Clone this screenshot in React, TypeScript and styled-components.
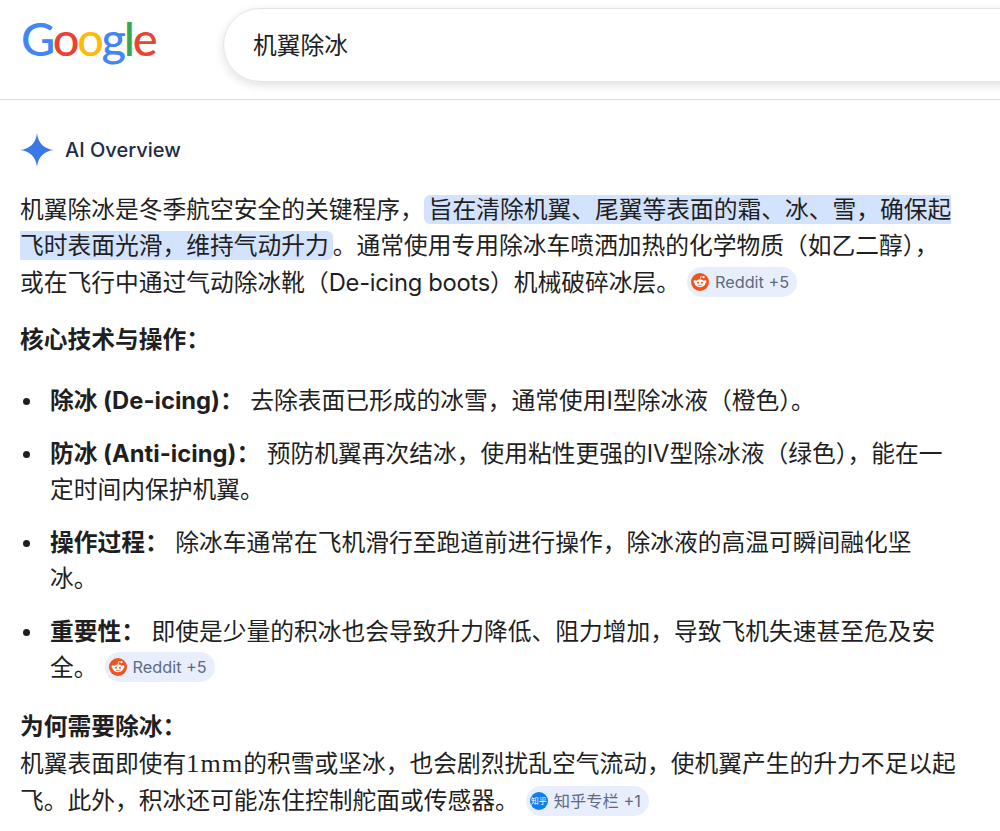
import styled, { createGlobalStyle } from 'styled-components';

const GlobalStyle = createGlobalStyle`
  html, body {
    margin: 0;
    padding: 0;
    background: #fff;
  }
`

const Page = styled.div`
  width: 1000px;
  height: 831px;
  overflow: hidden;
  color: #1f1f1f;
  font-family: "Inter", "Noto Sans CJK SC", sans-serif;
`
const Header = styled.header`
  display: flex;
  height: 100px;
  padding: 8px 0 0 21px;
  box-sizing: border-box;
  border-bottom: 1px solid #dadce0;
  overflow: hidden;
`
const Logo = styled.div`
  width: 202px;
  flex-shrink: 0;
  margin-top: -8px;
  font-family: "Lato", sans-serif;
  font-size: 47px;
  line-height: 77px;
  letter-spacing: -2.3px;
  font-weight: 500;
`
const LogoLetter = styled.span<{ $color: string }>`
  color: ${(p) => p.$color};
`
const SearchBox = styled.div`
  flex-shrink: 0;
  width: 850px;
  height: 74px;
  padding: 0 0 4px 29px;
  box-sizing: border-box;
  display: flex;
  align-items: center;
  border: 1px solid #e3e3e3;
  border-radius: 37px;
  box-shadow: 0 3px 10px rgba(32, 33, 36, 0.14);
  font-size: 23.75px;
  color: #202124;
`
const Main = styled.main`
  padding: 32px 42px 0 20px;
`
const OverviewHead = styled.div`
  display: flex;
  align-items: center;
  gap: 11px;
  height: 36px;
  font-size: 20px;
  font-weight: 500;
  color: #1c2d45;
`
const Para = styled.p`
  margin: 24px 0 0;
  font-size: 23.75px;
  line-height: 36.4px;
`
const Mark = styled.span`
  background: #d3e3fd;
  border-radius: 6px;
  padding: 0 4px 0 5px;
`
const Latin = styled.span`
  letter-spacing: -0.3px;
`
const Heading = styled.h3<{ $top: number }>`
  margin: ${(p) => p.$top}px 0 0;
  font-size: 23.75px;
  line-height: 36.5px;
  font-weight: 700;
`
const List = styled.ul`
  list-style: none;
  margin: 24px 0 0;
  padding: 0;
`
const Item = styled.li`
  position: relative;
  margin-bottom: 17px;
  padding-left: 30px;
  font-size: 23.75px;
  line-height: 36px;

  &::before {
    content: '';
    position: absolute;
    left: 3px;
    top: 15px;
    width: 7px;
    height: 7px;
    border-radius: 50%;
    background: #1f1f1f;
  }
`
const Term = styled.strong`
  font-weight: 700;
  margin-right: 6.5px;
`
const Closing = styled.div`
  margin-top: 1px;
  font-size: 23.75px;
  line-height: 36.4px;
`
const SerifRun = styled.span`
  font-family: "Liberation Serif", serif;
  font-size: 26px;
  letter-spacing: 1.2px;
`
const Chip = styled.span<{ $lift?: number }>`
  display: inline-flex;
  align-items: center;
  gap: 6px;
  height: 30px;
  margin-left: 7px;
  padding: 0 8px 0 4px;
  vertical-align: ${(p) => p.$lift ?? 0}px;
  border-radius: 15px;
  background: #e8eefc;
  color: #5e6a85;
  font-size: 16.3px;
  line-height: 30px;
`
const ZhihuBadge = styled.span`
  display: inline-flex;
  align-items: center;
  justify-content: center;
  width: 18px;
  height: 18px;
  border-radius: 50%;
  background: #0f7ef0;
  color: #fff;
  font-size: 8px;
`

const Sparkle = () => (
  <svg width="34" height="34" viewBox="0 0 34 34">
    <path d="M17 0C18 10 24 16 34 17C24 18 18 24 17 34C16 24 10 18 0 17C10 16 16 10 17 0Z" fill="#3b78e7" />
  </svg>
)

const RedditIcon = () => (
  <svg width="18" height="18" viewBox="0 0 20 20">
    <circle cx="10" cy="10" r="10" fill="#f0531c" />
    <ellipse cx="10" cy="11.5" rx="6" ry="4.2" fill="#fff" />
    <circle cx="4.3" cy="9.6" r="1.5" fill="#fff" />
    <circle cx="15.7" cy="9.6" r="1.5" fill="#fff" />
    <circle cx="7.8" cy="10.8" r="1.1" fill="#f0531c" />
    <circle cx="12.2" cy="10.8" r="1.1" fill="#f0531c" />
    <path d="M7.5 13.4Q10 15 12.5 13.4" stroke="#f0531c" strokeWidth="0.8" fill="none" />
    <path d="M10 7.4L10.8 4L13.6 4.6" stroke="#fff" strokeWidth="0.8" fill="none" />
    <circle cx="14" cy="4.6" r="1.2" fill="#fff" />
  </svg>
)

const RedditChip = () => (
  <Chip>
    <RedditIcon />
    Reddit +5
  </Chip>
)

const App = () => {
  return (
    <Page>
      <GlobalStyle />
      <Header>
        <Logo>
          <LogoLetter $color="#4285f4">G</LogoLetter>
          <LogoLetter $color="#ea4335">o</LogoLetter>
          <LogoLetter $color="#fbbc05">o</LogoLetter>
          <LogoLetter $color="#4285f4">g</LogoLetter>
          <LogoLetter $color="#34a853">l</LogoLetter>
          <LogoLetter $color="#ea4335">e</LogoLetter>
        </Logo>
        <SearchBox>机翼除冰</SearchBox>
      </Header>
      <Main>
        <OverviewHead>
          <Sparkle />
          AI Overview
        </OverviewHead>
        <Para>
          机翼除冰是冬季航空安全的关键程序，<Mark>旨在清除机翼、尾翼等表面的霜、冰、雪，确保起飞时表面光滑，维持气动升力</Mark>。通常使用专用除冰车喷洒加热的化学物质（如乙二醇），或在飞行中通过气动除冰靴（<Latin>De-icing boots</Latin>）机械破碎冰层。
          <RedditChip />
        </Para>
        <Heading $top={21}>核心技术与操作：</Heading>
        <List>
          <Item>
            <Term>除冰 (De-icing)：</Term>去除表面已形成的冰雪，通常使用I型除冰液（橙色）。
          </Item>
          <Item>
            <Term>防冰 (Anti-icing)：</Term>预防机翼再次结冰，使用粘性更强的IV型除冰液（绿色），能在一定时间内保护机翼。
          </Item>
          <Item>
            <Term>操作过程：</Term>除冰车通常在飞机滑行至跑道前进行操作，除冰液的高温可瞬间融化坚冰。
          </Item>
          <Item>
            <Term>重要性：</Term>即使是少量的积冰也会导致升力降低、阻力增加，导致飞机失速甚至危及安全。
            <RedditChip />
          </Item>
        </List>
        <Heading $top={23}>为何需要除冰：</Heading>
        <Closing>
          机翼表面即使有<SerifRun>1mm</SerifRun>的积雪或坚冰，也会剧烈扰乱空气流动，使机翼产生的升力不足以起飞。此外，积冰还可能冻住控制舵面或传感器。
          <Chip $lift={5}>
            <ZhihuBadge>知乎</ZhihuBadge>
            知乎专栏 +1
          </Chip>
        </Closing>
      </Main>
    </Page>
  );
};

export default App;
